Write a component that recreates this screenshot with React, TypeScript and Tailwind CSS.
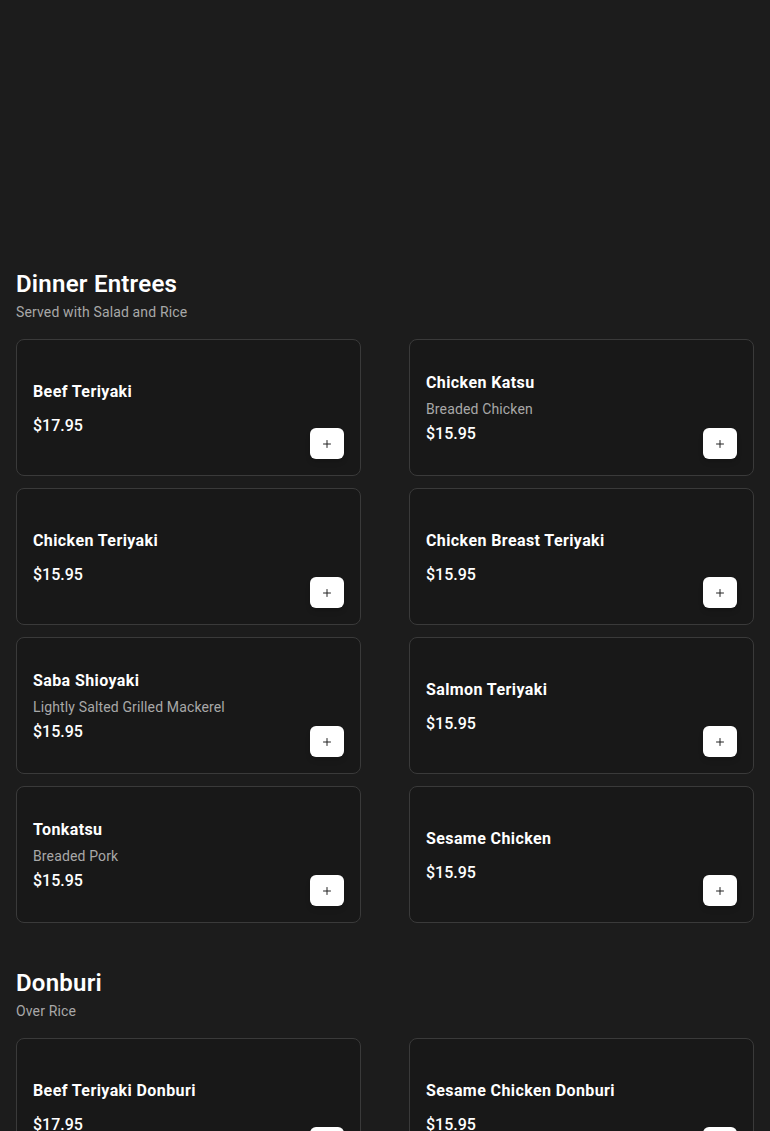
import React from 'react';
import { Plus } from 'lucide-react';

interface MenuItem {
  name: string;
  description?: string;
  price: string;
}

interface MenuSection {
  title: string;
  subtitle: string;
  items: MenuItem[];
}

const sections: MenuSection[] = [
  {
    title: 'Dinner Entrees',
    subtitle: 'Served with Salad and Rice',
    items: [
      { name: 'Beef Teriyaki', price: '$17.95' },
      { name: 'Chicken Katsu', description: 'Breaded Chicken', price: '$15.95' },
      { name: 'Chicken Teriyaki', price: '$15.95' },
      { name: 'Chicken Breast Teriyaki', price: '$15.95' },
      { name: 'Saba Shioyaki', description: 'Lightly Salted Grilled Mackerel', price: '$15.95' },
      { name: 'Salmon Teriyaki', price: '$15.95' },
      { name: 'Tonkatsu', description: 'Breaded Pork', price: '$15.95' },
      { name: 'Sesame Chicken', price: '$15.95' },
    ],
  },
  {
    title: 'Donburi',
    subtitle: 'Over Rice',
    items: [
      { name: 'Beef Teriyaki Donburi', price: '$17.95' },
      { name: 'Sesame Chicken Donburi', price: '$15.95' },
      { name: 'Chicken Teriyaki Donburi', price: '$15.95' },
      { name: 'Katsu Donburi', description: 'Breaded Pork', price: '$15.95' },
    ],
  },
];

const ItemCard: React.FC<{ item: MenuItem }> = ({ item }) => (
  <div className="flex min-h-[137px] items-center justify-between rounded-lg border border-[#3a3a3a] bg-[#181818] p-4">
    <div className="flex flex-col pt-[2px]">
      <h3
        className={`text-base font-bold leading-6 tracking-[0.025em] text-white ${
          item.description ? 'mb-1' : 'mb-[10px]'
        }`}
      >
        {item.name}
      </h3>
      {item.description && (
        <p className="mb-[3px] text-sm leading-5 tracking-[0.01em] text-[#a8a8a8]">{item.description}</p>
      )}
      <span className="text-base font-medium leading-6 text-white">{item.price}</span>
    </div>
    <button className="flex h-[31px] w-[34px] items-center justify-center self-end rounded-md bg-white text-[#222] shadow-md">
      <Plus className="h-3 w-3" strokeWidth={2} />
    </button>
  </div>
);

export default function App() {
  return (
    <div
      className="min-h-screen bg-[#1c1c1c] px-4 pt-[268px] pb-10"
      style={{ fontFamily: 'Roboto, "Noto Sans", sans-serif' }}
    >
      <div className="flex flex-col gap-11">
        {sections.map((section) => (
          <section key={section.title}>
            <div className="mb-[17px]">
              <h2 className="text-2xl font-semibold leading-8 tracking-[0.01em] text-white">{section.title}</h2>
              <p className="mt-0.5 text-sm leading-5 tracking-[0.01em] text-[#a8a8a8]">{section.subtitle}</p>
            </div>
            <div className="grid grid-cols-2 gap-x-12 gap-y-3">
              {section.items.map((item) => (
                <ItemCard key={item.name} item={item} />
              ))}
            </div>
          </section>
        ))}
      </div>
    </div>
  );
}
